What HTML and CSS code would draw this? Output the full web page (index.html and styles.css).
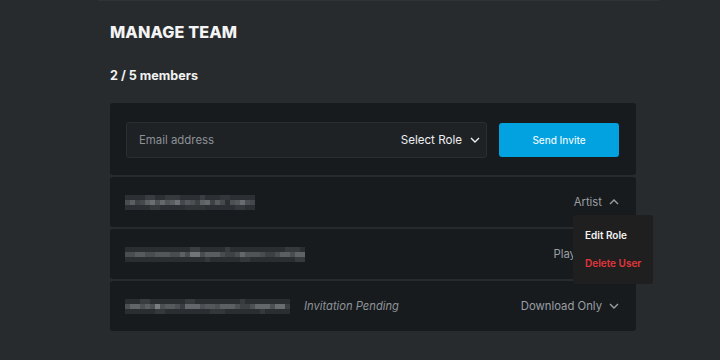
FILE: index.html
```html
<!DOCTYPE html>
<html>
<head>
<meta charset="utf-8">
<link rel="stylesheet" href="styles.css">
</head>
<body>
<div class="page">
  <h1 class="title">MANAGE TEAM</h1>
  <div class="count">2 / 5 members</div>
  <div class="list">
    <div class="card invite">
      <div class="field">
        <span class="placeholder">Email address</span>
        <span class="select">Select Role
          <svg class="chev" width="10" height="6" viewBox="0 0 10 6"><path d="M1 1l4 4 4-4" fill="none" stroke="currentColor" stroke-width="1.4"/></svg>
        </span>
      </div>
      <button class="send">Send Invite</button>
    </div>
    <div class="card row">
      <svg class="mosaic" width="130" height="15" viewBox="0 0 130 15">
        <g fill="#2c2f33"><rect x="0" y="0" width="130" height="15"/></g>
        <rect x="0" y="5" width="5" height="5" fill="#4a4d50"/><rect x="5" y="5" width="5" height="5" fill="#5b5e61"/><rect x="10" y="5" width="5" height="5" fill="#3f4245"/><rect x="15" y="5" width="5" height="5" fill="#46494c"/><rect x="20" y="5" width="5" height="5" fill="#5e6164"/><rect x="25" y="5" width="5" height="5" fill="#6b6e71"/><rect x="30" y="5" width="5" height="5" fill="#4f5255"/><rect x="35" y="5" width="5" height="5" fill="#65686b"/><rect x="40" y="5" width="5" height="5" fill="#515457"/><rect x="45" y="5" width="5" height="5" fill="#5a5d60"/><rect x="50" y="5" width="5" height="5" fill="#6e7174"/><rect x="55" y="5" width="5" height="5" fill="#45484b"/><rect x="60" y="5" width="5" height="5" fill="#55585b"/><rect x="65" y="5" width="5" height="5" fill="#4d5053"/><rect x="70" y="5" width="5" height="5" fill="#3d4043"/><rect x="75" y="5" width="5" height="5" fill="#5f6265"/><rect x="80" y="5" width="5" height="5" fill="#66696c"/><rect x="85" y="5" width="5" height="5" fill="#3f4245"/><rect x="90" y="5" width="5" height="5" fill="#585b5e"/><rect x="95" y="5" width="5" height="5" fill="#474a4d"/><rect x="100" y="5" width="5" height="5" fill="#2d3033"/><rect x="105" y="5" width="5" height="5" fill="#4e5154"/><rect x="110" y="5" width="5" height="5" fill="#55585b"/><rect x="115" y="5" width="5" height="5" fill="#6a6d70"/><rect x="120" y="5" width="5" height="5" fill="#4b4e51"/><rect x="125" y="5" width="5" height="5" fill="#45484b"/>
        <rect x="20" y="0" width="10" height="5" fill="#3a3d40"/><rect x="40" y="0" width="15" height="5" fill="#363a3d"/><rect x="75" y="0" width="5" height="5" fill="#3b3e41"/><rect x="95" y="0" width="10" height="5" fill="#34373a"/><rect x="25" y="10" width="10" height="5" fill="#37393c"/><rect x="60" y="10" width="20" height="5" fill="#323538"/><rect x="110" y="10" width="10" height="5" fill="#36393c"/>
      </svg>
      <span class="role">Artist
        <svg class="chev" width="10" height="6" viewBox="0 0 10 6"><path d="M1 5l4-4 4 4" fill="none" stroke="currentColor" stroke-width="1.4"/></svg>
      </span>
      <div class="menu">
        <div class="menu-item">Edit Role</div>
        <div class="menu-item danger">Delete User</div>
      </div>
    </div>
    <div class="card row">
      <svg class="mosaic" width="180" height="15" viewBox="0 0 180 15">
        <rect x="0" y="0" width="180" height="15" fill="#2b2e31"/>
        <rect x="0" y="5" width="180" height="5" fill="#4a4d50"/>
        <rect x="10" y="5" width="10" height="5" fill="#585b5e"/><rect x="30" y="5" width="15" height="5" fill="#54575a"/><rect x="55" y="5" width="5" height="5" fill="#5e6164"/><rect x="65" y="5" width="10" height="5" fill="#727578"/><rect x="80" y="5" width="15" height="5" fill="#5a5d60"/><rect x="100" y="5" width="10" height="5" fill="#3f4245"/><rect x="115" y="5" width="5" height="5" fill="#65686b"/><rect x="120" y="5" width="15" height="5" fill="#515457"/><rect x="140" y="5" width="10" height="5" fill="#3d4043"/><rect x="155" y="5" width="10" height="5" fill="#5c5f62"/><rect x="170" y="5" width="10" height="5" fill="#606366"/>
        <rect x="65" y="0" width="10" height="5" fill="#3b3e41"/><rect x="100" y="0" width="5" height="5" fill="#393c3f"/><rect x="160" y="0" width="15" height="5" fill="#36393c"/><rect x="80" y="10" width="5" height="5" fill="#35383b"/><rect x="115" y="10" width="10" height="5" fill="#34373a"/><rect x="170" y="10" width="10" height="5" fill="#37393c"/>
      </svg>
      <span class="role">Playback
        <svg class="chev" width="10" height="6" viewBox="0 0 10 6"><path d="M1 1l4 4 4-4" fill="none" stroke="currentColor" stroke-width="1.4"/></svg>
      </span>
    </div>
    <div class="card row">
      <svg class="mosaic" width="165" height="15" viewBox="0 0 165 15">
        <rect x="0" y="0" width="165" height="15" fill="#2b2e31"/>
        <rect x="0" y="5" width="165" height="5" fill="#4d5053"/>
        <rect x="5" y="5" width="10" height="5" fill="#626568"/><rect x="20" y="5" width="5" height="5" fill="#5b5e61"/><rect x="30" y="5" width="5" height="5" fill="#7a7d80"/><rect x="40" y="5" width="10" height="5" fill="#58595c"/><rect x="55" y="5" width="5" height="5" fill="#3a3d40"/><rect x="60" y="5" width="15" height="5" fill="#63666a"/><rect x="80" y="5" width="10" height="5" fill="#55585b"/><rect x="95" y="5" width="15" height="5" fill="#5d6063"/><rect x="115" y="5" width="10" height="5" fill="#3e4144"/><rect x="130" y="5" width="15" height="5" fill="#646769"/><rect x="150" y="5" width="10" height="5" fill="#6a6d70"/><rect x="160" y="5" width="5" height="5" fill="#3c3f42"/>
        <rect x="15" y="0" width="10" height="5" fill="#393c3f"/><rect x="60" y="0" width="10" height="5" fill="#37393c"/><rect x="115" y="0" width="5" height="5" fill="#383b3e"/><rect x="30" y="10" width="10" height="5" fill="#35383b"/><rect x="85" y="10" width="15" height="5" fill="#34373a"/><rect x="135" y="10" width="5" height="5" fill="#36393c"/>
      </svg>
      <span class="pending">Invitation Pending</span>
      <span class="role">Download Only
        <svg class="chev" width="10" height="6" viewBox="0 0 10 6"><path d="M1 1l4 4 4-4" fill="none" stroke="currentColor" stroke-width="1.4"/></svg>
      </span>
    </div>
  </div>
</div>
</body>
</html>
```
FILE: styles.css
```css
html, body {
  margin: 0;
  height: 100%;
  background: #272b2e;
  font-family: Inter, "Noto Sans", sans-serif;
}
.page {
  width: 561px;
  margin: 0 auto 0 98px;
  height: 100%;
  box-sizing: border-box;
  border-top: 1px solid #2f3337;
  padding: 19px 23px 0 12px;
}
.title {
  margin: 0;
  font-size: 16.2px;
  line-height: 24px;
  font-weight: 800;
  color: #f4f4f4;
  letter-spacing: 0.1px;
}
.count {
  margin-top: 23px;
  font-size: 12.6px;
  line-height: 18px;
  font-weight: 700;
  color: #f2f2f2;
}
.list {
  margin-top: 18px;
  display: flex;
  flex-direction: column;
  gap: 2px;
}
.card {
  background: #181b1e;
  border-radius: 3px;
}
.invite {
  display: flex;
  align-items: center;
  gap: 12px;
  padding: 19px 17px 17px 16px;
}
.field {
  flex: 1;
  height: 36px;
  box-sizing: border-box;
  display: flex;
  align-items: center;
  justify-content: space-between;
  background: #1f2225;
  border: 1px solid #2a2e32;
  border-radius: 3px;
  padding: 0 6px 0 12px;
}
.placeholder {
  font-size: 11.4px;
  color: #8c9196;
}
.select {
  font-size: 11.6px;
  color: #eceef0;
  display: flex;
  align-items: center;
  gap: 8px;
}
.send {
  width: 120px;
  height: 34px;
  border: none;
  border-radius: 3px;
  background: #02a1e0;
  color: #e8f6fc;
  font-family: Inter, sans-serif;
  font-size: 10px;
  font-weight: 500;
}
.row {
  position: relative;
  height: 50px;
  display: flex;
  align-items: center;
  padding: 0 17px 0 15px;
}
.mosaic {
  display: block;
  filter: blur(0.3px);
}
.pending {
  margin-left: 14px;
  font-size: 11.2px;
  font-style: italic;
  color: #8e9398;
}
.role {
  margin-left: auto;
  font-size: 11.3px;
  color: #9a9fa4;
  display: flex;
  align-items: center;
  gap: 7px;
}
.chev { display: block; }
.menu {
  position: absolute;
  right: -17px;
  top: 38px;
  width: 80px;
  height: 69px;
  box-sizing: border-box;
  background: #201f1f;
  border-radius: 3px;
  z-index: 2;
  padding: 12px 0 0 12px;
  display: flex;
  flex-direction: column;
  gap: 12px;
}
.menu-item {
  font-size: 10px;
  line-height: 16px;
  font-weight: 600;
  color: #f3f3f3;
}
.menu-item.danger { color: #e0363b; }
```
